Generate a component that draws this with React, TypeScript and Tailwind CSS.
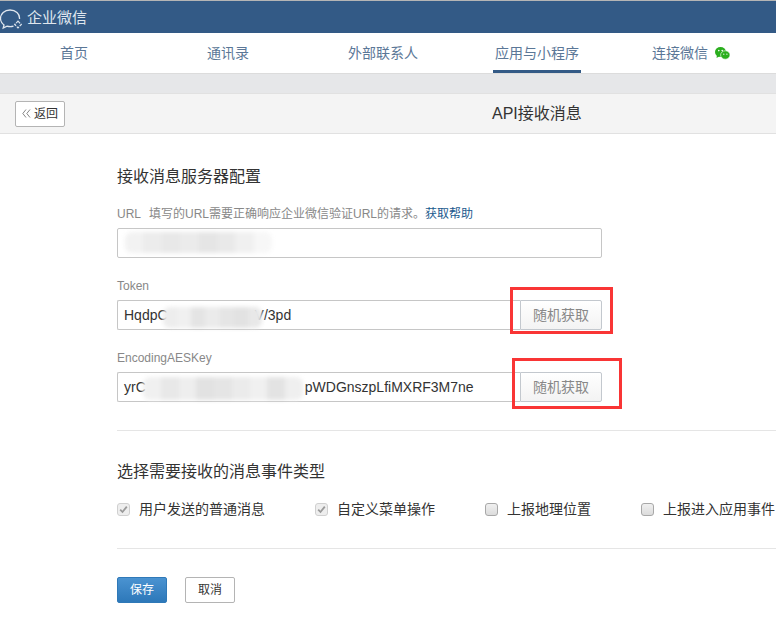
function Blur({ className, blocks }: { className: string; blocks: string[] }) {
  return (
    <div className={"absolute flex overflow-hidden blur-[2px] rounded-[7px] " + className}>
      {blocks.map((c, i) => (
        <div key={i} className={"flex-1 " + c} />
      ))}
    </div>
  );
}

function Check({ label, checked, className }: { label: string; checked?: boolean; className: string }) {
  return (
    <div className={"flex items-center shrink-0 " + className}>
      <div className={"w-[13px] h-[13px] rounded-[3px] border flex items-center justify-center " + (checked ? "border-[#d0d0d0] bg-[#eeeeee]" : "border-[#a8a8a8] bg-gradient-to-b from-[#f0f0f0] to-[#dcdcdc]")}>
        {checked && (
          <svg width="9" height="9" viewBox="0 0 9 9">
            <path d="M1.2 4.6 L3.5 7 L7.8 1.6" fill="none" stroke="#9a9a9a" strokeWidth="1.8" />
          </svg>
        )}
      </div>
      <span className="ml-[9px] text-[14px] text-[#333333] whitespace-nowrap">{label}</span>
    </div>
  );
}

function RandomBtn() {
  return (
    <div className="w-[82px] h-[30px] shrink-0 border border-[#c3c8ce] rounded-r-[2px] bg-gradient-to-b from-white to-[#f3f3f3] flex items-center justify-center text-[14px] text-[#888888]">
      随机获取
    </div>
  );
}

export default function App() {
  return (
    <div className="relative w-[776px] h-[618px] overflow-hidden bg-white font-['Liberation_Sans','Noto_Sans_CJK_SC',sans-serif]">
      <div className="h-[1px] bg-[#b5b5b5]" />
      <header className="h-[32px] bg-[#335a86] flex items-center">
        <svg width="23" height="22" viewBox="0 5 23 22" className="mt-[3px]" fill="none" stroke="#dfe6ee" strokeWidth="1.3">
          <path d="M19.5 16 C20 10.5 15.5 7 10 7 C4.5 7 0.5 11 0.5 15.5 C0.5 18.5 2 20.5 4 22 L3.2 25 L7 23.2 C9 23.8 11.5 23.8 13.5 23.2" />
          <path d="M18 18.2 L21.3 21.5 L18 24.8 L14.7 21.5 Z" strokeWidth="1.2" strokeDasharray="3 1" />
        </svg>
        <span className="ml-[4px] text-[15px] text-[#dfe6ee] mt-[2px]">企业微信</span>
      </header>
      <nav className="h-[40px] ml-[-2px] w-[790px] flex bg-white text-[14px] text-[#5b7797]">
        <div className="w-[152px] flex items-center justify-center">首页</div>
        <div className="w-[156px] flex items-center justify-center">通讯录</div>
        <div className="w-[154px] flex items-center justify-center">外部联系人</div>
        <div className="w-[154px] flex justify-center">
          <div className="w-[88px] h-[40px] flex items-center justify-center border-b-[3px] border-[#335a86] pt-[3px]">应用与小程序</div>
        </div>
        <div className="w-[154px] flex items-center justify-center">
          连接微信
          <svg width="15" height="13" viewBox="0 0 15 13" className="ml-[7px]">
            <ellipse cx="5.5" cy="5" rx="5.5" ry="5" fill="#2aae1d" />
            <path d="M2 8 L1.5 11 L5 9 Z" fill="#2aae1d" />
            <ellipse cx="10.3" cy="8" rx="4.7" ry="4.2" fill="#2aae1d" stroke="#ffffff" strokeWidth="0.6" />
            <circle cx="3.8" cy="3.6" r="0.8" fill="#ffffff" />
            <circle cx="7.2" cy="3.6" r="0.8" fill="#ffffff" />
            <circle cx="8.8" cy="7.2" r="0.6" fill="#ffffff" />
            <circle cx="11.9" cy="7.2" r="0.6" fill="#ffffff" />
          </svg>
        </div>
      </nav>
      <div className="h-[20px] bg-[#e6e7e9] border-t border-[#dcdcdc]" />
      <div className="h-[41px] bg-[#f4f4f4] border-y border-[#e1e1e1] flex items-center pl-[15px]">
        <div className="w-[50px] h-[26px] border border-[#b4b4b4] rounded-[2px] bg-white flex items-center justify-center text-[12px] text-[#333333] gap-[3px]">
          <svg width="9" height="9" viewBox="0 0 9 9" fill="none" stroke="#777777" strokeWidth="0.9">
            <path d="M4 0.5 L0.8 4.5 L4 8.5 M8 0.5 L4.8 4.5 L8 8.5" />
          </svg>
          返回
        </div>
        <div className="ml-[427px] text-[16px] text-[#333333]">API接收消息</div>
      </div>
      <main className="pl-[117px]">
        <h2 className="mt-[33px] h-[20px] leading-[20px] text-[16px] font-normal text-[#333333]">接收消息服务器配置</h2>
        <div className="mt-[19px] h-[16px] leading-[16px] text-[12px] text-[#888888] whitespace-pre">
          URL<span className="ml-[8px]">填写的URL需要正确响应企业微信验证URL的请求。</span><span className="text-[#1b5a8e]">获取帮助</span>
        </div>
        <div className="relative mt-[6px] w-[485px] h-[30px] border border-[#c6c6c6] rounded-[2px] bg-white">
          <Blur className="left-[7px] top-[3px] w-[147px] h-[21px]" blocks={["bg-[#f2f2f2]", "bg-[#ececec]", "bg-[#e8e8e8]", "bg-[#ebebeb]", "bg-[#e5e5e5]", "bg-[#e9e9e9]", "bg-[#f0f0f0]", "bg-[#f7f7f7]"]} />
        </div>
        <div className="mt-[20px] h-[16px] leading-[16px] text-[12px] text-[#888888]">Token</div>
        <div className="mt-[6px] w-[485px] flex">
          <div className="relative flex-1 h-[30px] border border-r-0 border-[#c6c6c6] rounded-l-[2px] flex items-center pl-[6px] text-[14px] text-[#333333]">
            <span>HqdpC</span>
            <span className="ml-[87px]">V/3pd</span>
            <Blur className="left-[45px] top-[6px] w-[99px] h-[21px]" blocks={["bg-[#ededed]", "bg-[#f0f0f0]", "bg-[#e4e4e4]", "bg-[#ebebeb]", "bg-[#e5e5e5]", "bg-[#e2e2e2]", "bg-[#e8e8e8]"]} />
          </div>
          <RandomBtn />
        </div>
        <div className="mt-[20px] h-[16px] leading-[16px] text-[12px] text-[#888888]">EncodingAESKey</div>
        <div className="mt-[6px] w-[485px] flex">
          <div className="relative flex-1 h-[30px] border border-r-0 border-[#c6c6c6] rounded-l-[2px] flex items-center pl-[6px] text-[14px] text-[#333333]">
            <span>yrC</span>
            <span className="ml-[159px]">pWDGnszpLfiMXRF3M7ne</span>
            <Blur className="left-[25px] top-[4px] w-[160px] h-[23px]" blocks={["bg-[#f0f0f0]", "bg-[#e8e8e8]", "bg-[#eeeeee]", "bg-[#e2e2e2]", "bg-[#e5e5e5]", "bg-[#ebebeb]", "bg-[#f0f0f0]", "bg-[#e3e3e3]", "bg-[#efefef]"]} />
          </div>
          <RandomBtn />
        </div>
        <div className="mt-[28px] h-[1px] w-[680px] bg-[#e5e5e5]" />
        <h2 className="mt-[31px] h-[20px] leading-[20px] text-[16px] font-normal text-[#333333]">选择需要接收的消息事件类型</h2>
        <div className="mt-[19px] flex h-[16px]">
          <Check checked label="用户发送的普通消息" className="w-[198px]" />
          <Check checked label="自定义菜单操作" className="w-[170px]" />
          <Check label="上报地理位置" className="w-[156px]" />
          <Check label="上报进入应用事件" className="w-[140px]" />
        </div>
        <div className="mt-[31px] h-[1px] w-[680px] bg-[#e5e5e5]" />
        <div className="mt-[28px] flex gap-[18px]">
          <div className="w-[50px] h-[26px] rounded-[2px] border border-[#2f79b8] bg-gradient-to-b from-[#4a93d1] to-[#2d78b9] flex items-center justify-center text-[12px] text-white">保存</div>
          <div className="w-[50px] h-[26px] rounded-[2px] border border-[#b4b4b4] bg-white flex items-center justify-center text-[12px] text-[#333333]">取消</div>
        </div>
      </main>
      <div className="absolute left-[510px] top-[287px] w-[103px] h-[47px] border-[3px] border-[#f93535]" />
      <div className="absolute left-[512px] top-[358px] w-[110px] h-[51px] border-[3px] border-[#f93535]" />
    </div>
  );
}
